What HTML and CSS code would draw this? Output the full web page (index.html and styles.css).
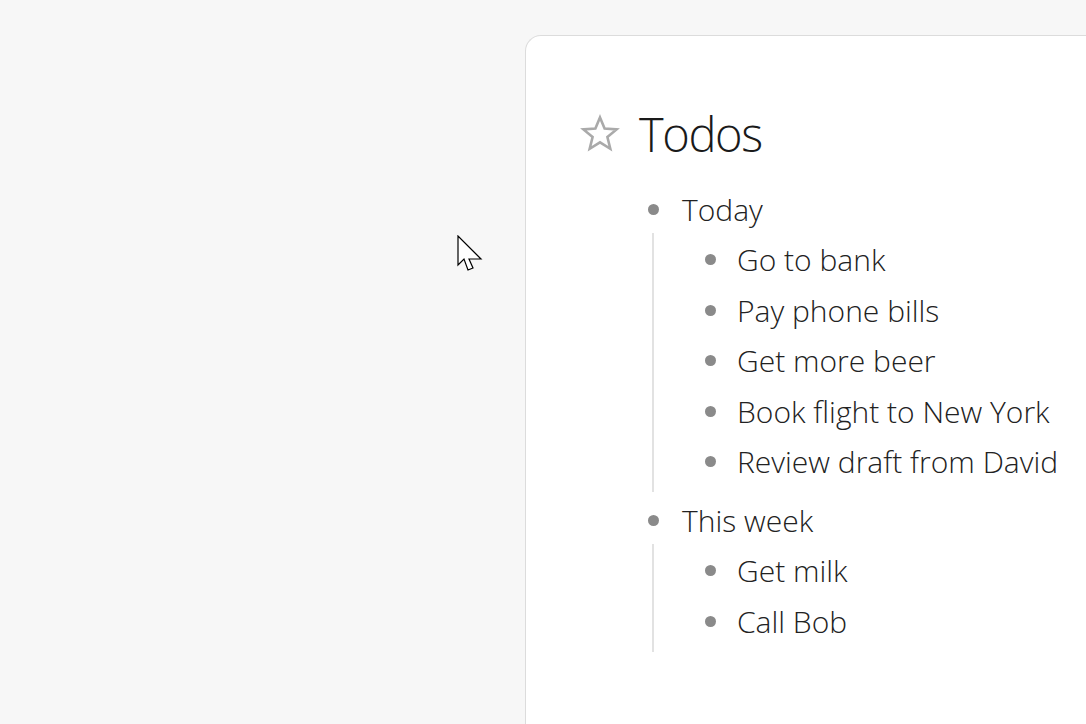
FILE: index.html
```html
<!DOCTYPE html>
<html>
<head>
<meta charset="utf-8">
<link rel="stylesheet" href="styles.css">
</head>
<body>
<div class="page">
  <div class="card">
    <div class="title-row">
      <svg class="star" width="40" height="40" viewBox="0 0 40 40"><path d="M20 3.5 L24.6 14.6 L36.6 15.4 L27.4 23.1 L30.3 34.8 L20 28.4 L9.7 34.8 L12.6 23.1 L3.4 15.4 L15.4 14.6 Z" fill="none" stroke="#aaa" stroke-width="2.6" stroke-linejoin="miter"/></svg>
      <h1 class="title">Todos</h1>
    </div>
    <ul class="list">
      <li>
        <div class="row lvl1"><span class="bullet"></span><span class="text">Today</span></div>
        <ul class="children">
          <li><div class="row"><span class="bullet"></span><span class="text">Go to bank</span></div></li>
          <li><div class="row"><span class="bullet"></span><span class="text">Pay phone bills</span></div></li>
          <li><div class="row"><span class="bullet"></span><span class="text">Get more beer</span></div></li>
          <li><div class="row"><span class="bullet"></span><span class="text">Book flight to New York</span></div></li>
          <li><div class="row"><span class="bullet"></span><span class="text">Review draft from David</span></div></li>
        </ul>
      </li>
      <li>
        <div class="row lvl1"><span class="bullet"></span><span class="text">This week</span></div>
        <ul class="children">
          <li><div class="row"><span class="bullet"></span><span class="text">Get milk</span></div></li>
          <li><div class="row"><span class="bullet"></span><span class="text">Call Bob</span></div></li>
        </ul>
      </li>
    </ul>
  </div>
</div>
<svg class="cursor" width="26" height="38" viewBox="0 0 26 38"><path d="M1 1 L1 30 L7 24 L11 35 L16 33 L12 24 L24 24 Z" fill="#fff" stroke="#000" stroke-width="1.2" stroke-linejoin="miter"/></svg>
</body>
</html>
```
FILE: styles.css
```css
html, body {
  margin: 0;
  padding: 0;
  background: #f7f7f7;
  overflow: hidden;
}
.page {
  height: 724px;
  padding: 35px 0 0 525px;
  box-sizing: border-box;
  overflow: hidden;
}
.card {
  background: #fff;
  border: 1px solid #dcdcdc;
  border-right: none;
  border-bottom: none;
  border-radius: 16px 0 0 0;
  height: 720px;
  width: 620px;
  padding: 78px 0 0 54px;
  box-sizing: border-box;
  font-family: "Open Sans", sans-serif;
  font-weight: 300;
}
.title-row {
  display: flex;
  align-items: center;
  gap: 19px;
  height: 40px;
}
.star { display: block; }
.title {
  margin: 0;
  font-size: 47px;
  font-weight: 300;
  letter-spacing: -1.4px;
  color: #1a1a1a;
  line-height: 1;
}
.list, .children {
  list-style: none;
  margin: 0;
  padding: 0;
}
.list {
  margin-top: 30px;
  margin-left: 63px;
}
.row {
  display: flex;
  align-items: center;
  height: 50.5px;
  font-size: 30px;
  color: #222;
  white-space: nowrap;
}
.bullet {
  width: 20px;
  flex: 0 0 20px;
  height: 11px;
  position: relative;
  margin-right: 17px;
}
.lvl1 .bullet {
  margin-right: 19px;
}
.bullet::before {
  content: "";
  position: absolute;
  left: 4.5px;
  top: 0;
  width: 11px;
  height: 11px;
  border-radius: 50%;
  background: #8a8a8a;
}
.children {
  margin: -2px 0 3px 9px;
  padding: 2px 0 5px 46px;
  border-left: 2px solid #e2e2e2;
}
.cursor {
  position: fixed;
  left: 457px;
  top: 235px;
}
```
